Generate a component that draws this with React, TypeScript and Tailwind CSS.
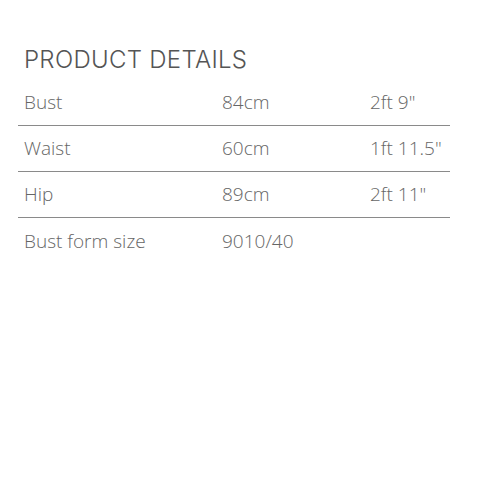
import React from 'react';

// Filas de la tabla de medidas.
const rows = [
  { label: 'Bust', cm: '84cm', ft: '2ft 9"' },
  { label: 'Waist', cm: '60cm', ft: '1ft 11.5"' },
  { label: 'Hip', cm: '89cm', ft: '2ft 11"' },
  { label: 'Bust form size', cm: '9010/40', ft: '' },
];

export default function App() {
  return (
    <div className="w-[500px] h-[500px] bg-white pt-[45px] pl-[18px]" style={{ fontFamily: '"Open Sans", sans-serif' }}>
      <h2
        className="pl-[6px] text-[24px] leading-[30px] font-light text-[#555] tracking-[0.3px] h-[35px]"
        style={{ fontFamily: 'Inter, sans-serif' }}
      >
        PRODUCT DETAILS
      </h2>
      <div className="w-[432px]">
        {rows.map((row, i) => (
          <div
            key={row.label}
            className={`grid grid-cols-[198px_148px_1fr] h-[46px] items-center text-[19px] font-light text-[#666] ${i < rows.length - 1 ? 'border-b border-[#8a8a8a]' : ''}`}
          >
            <div className="pl-[6px]">{row.label}</div>
            <div className="pl-[6px]">{row.cm}</div>
            <div className="pl-[6px]">{row.ft}</div>
          </div>
        ))}
      </div>
    </div>
  );
}
